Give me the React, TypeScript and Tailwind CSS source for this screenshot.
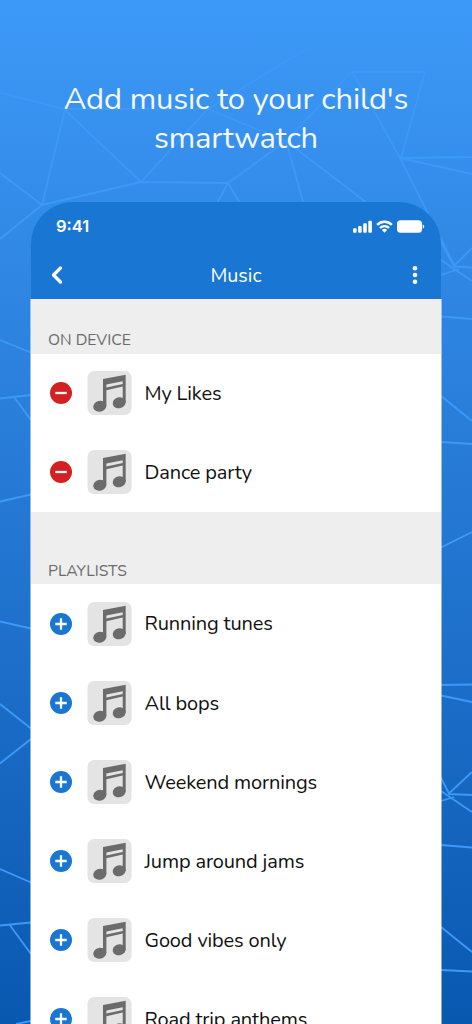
import { ChevronLeft } from "lucide-react";

const onDevice = ["My Likes", "Dance party"];

const playlists = [
  "Running tunes",
  "All bops",
  "Weekend mornings",
  "Jump around jams",
  "Good vibes only",
  "Road trip anthems",
];

const Network = () => (
  <svg className="absolute inset-0" width="472" height="1024" viewBox="0 0 472 1024" fill="none" stroke="#3d99f7" strokeWidth="1.8">
    {/* Top */}
    <path d="M0 92.5 65 109H208L306 49M65 109 42 205M65 110 141 182 208 109 286 141 352 71M42 205 141 182 228 183 286 141M352 72H425L401 158M352 71 400 158 454 265M400 158 472 157M400 158 472 174M286 141 304 205M286 141 367 203M217 203 228 183 240 203M0 173 42 205 0 239" />
    {/* Left */}
    <path d="M0 340 31 352.5M0 398.5 31 395M14 397 31 420M0 501.5 31 494.5M0 621.5 31 628.5M0 704 31 728.5M31 739 0 763.5M0 869 31 882.5M0 925.5 31 922.5M9 924 31 954M16 1024 31 1021" />
    {/* Right */}
    <path d="M441 242 454 266 472 248M454 266.5 472 267.5M441 260 472 281M441 275 459 269M441 316.5 472 319M441 396 472 421M441 442 472 444M441 547.5 472 532M441 685 472 684.5M441 695.5 472 702M441 778 449 793.5 472 772M449 794 472 795M441 791 472 812M441 801 454 797M441 845 472 847.5M441 927 472 952M441 970 472 971.5" />
  </svg>
);

const StatusIcons = () => (
  <svg width="72" height="14" viewBox="0 0 72 14" fill="white">
    <rect x="0" y="8.3" width="3.6" height="4.4" rx="1" />
    <rect x="5.1" y="6" width="3.6" height="6.7" rx="1" />
    <rect x="10.2" y="3.3" width="3.6" height="9.4" rx="1" />
    <rect x="15.3" y="0.8" width="3.6" height="11.9" rx="1" />
    <g fill="none" stroke="white" strokeWidth="2.4">
      <path d="M24.1 4.8a10.6 10.6 0 0 1 14.8 0" />
      <path d="M27 8a6.4 6.4 0 0 1 9 0" />
    </g>
    <path d="M28.9 10a3.8 3.8 0 0 1 5.2 0L31.5 12.7Z" />
    <rect x="44" y="0.2" width="25" height="12.6" rx="3.5" />
    <path d="M69.7 4.5v4.2a2.2 2.2 0 0 0 0-4.2Z" />
  </svg>
);

const MusicNote = () => (
  <svg className="shrink-0" width="45" height="44" viewBox="-0.5 0 45 44" fill="#6b6b6b">
    <rect width="44" height="44" rx="6.5" fill="#e4e4e4" />
    <path fillRule="evenodd" d="M15.5 8 38.2 3.7V31.7H35.2V15.4L18.9 19.3V35H15.5ZM18.9 13.6V16.6L35.2 13.1V10.3Z" />
    <ellipse cx="12.3" cy="35.2" rx="6.6" ry="5.4" transform="rotate(-15 12.3 35.2)" />
    <ellipse cx="31.7" cy="31.8" rx="6.6" ry="5.4" transform="rotate(-15 31.7 31.8)" />
  </svg>
);

const Row = ({ name, added }: { name: string; added?: boolean }) => (
  <div className="flex h-[79.1px] shrink-0 items-center pl-[19px]">
    <button className="mr-[15px] h-[22px] w-[22px] shrink-0" aria-label={added ? "Remove" : "Add"}>
      <svg width="22" height="22" viewBox="0 0 22 22">
        <circle cx="11" cy="11" r="11" fill={added ? "#d32022" : "#1976d2"} />
        <path d={added ? "M5.3 11h11.4" : "M5.3 11h11.4M11 5.3v11.4"} stroke="white" strokeWidth="2.3" />
      </svg>
    </button>
    <MusicNote />
    <span className="ml-[12.5px] whitespace-nowrap pt-[1.5px] text-[20px] leading-6 tracking-[-0.14px] text-[#111]">{name}</span>
  </div>
);

export default function App() {
  return (
    <div className="relative h-[1024px] w-[472px] overflow-hidden bg-linear-to-b from-[#3d99f7] to-[#0858b0] font-['Nunito',Lato,sans-serif]">
      <Network />

      <div className="relative flex h-full flex-col items-center">
        {/* Heading */}
        <h1 className="h-[202px] shrink-0 whitespace-nowrap pt-[79.5px] text-center text-[31px] font-normal leading-[39.5px] tracking-[-0.15px] text-[#f5f8fc]">
          Add music to your child's
          <br />
          smartwatch
        </h1>

        {/* Phone */}
        <div className="flex w-[412px] min-h-0 flex-1 flex-col">
          <div className="mr-px ml-[0.5px] h-[97px] shrink-0 rounded-t-[42px] bg-[#1976d2] text-white">
            <div className="flex h-[49px] items-center justify-between pl-[25.5px] pr-4">
              <span className="font-[Inter] text-[16.5px] font-semibold">9:41</span>
              <StatusIcons />
            </div>
            <div className="grid h-12 grid-cols-[1fr_auto_1fr] items-center pl-[12.5px] pr-[22px]">
              <ChevronLeft size={28} strokeWidth={2.8} />
              <span className="pl-[10px] pt-px text-[19.7px] leading-6">Music</span>
              <svg className="justify-self-end" width="8" height="18" viewBox="0 0 8 18" fill="white">
                <circle cx="4" cy="2.3" r="2.3" />
                <circle cx="4" cy="9" r="2.3" />
                <circle cx="4" cy="15.7" r="2.3" />
              </svg>
            </div>
          </div>

          <div className="min-h-0 flex-1 overflow-hidden border-x border-white/50 bg-white bg-clip-padding">
            <h2 className="flex h-[54.8px] items-end bg-[#eee] pb-1 pl-[17px] text-[15.7px] leading-5 text-[#6b6b6b]">ON DEVICE</h2>
            {onDevice.map((name) => (
              <Row key={name} name={name} added />
            ))}

            <h2 className="flex h-[72.2px] items-end bg-[#eee] pb-[3.5px] pl-[17px] text-[15.7px] leading-5 text-[#6b6b6b]">PLAYLISTS</h2>
            {playlists.map((name) => (
              <Row key={name} name={name} />
            ))}
          </div>
        </div>
      </div>
    </div>
  );
}
